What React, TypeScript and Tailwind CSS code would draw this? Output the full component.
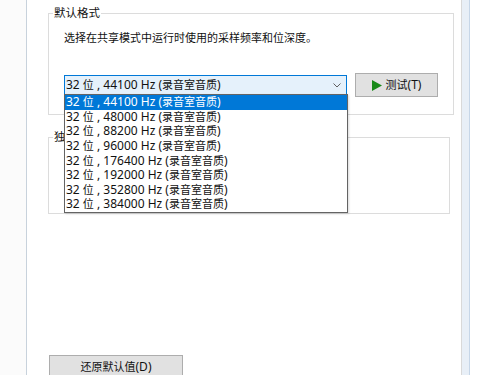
import React from 'react';

const rates = ['44100', '48000', '88200', '96000', '176400', '192000', '352800', '384000'];

const font = { fontFamily: '"Noto Sans", "Noto Sans CJK SC", sans-serif' };

// CJK glyphs in the original are a touch narrower than the latin run
const Cjk: React.FC<{ children: React.ReactNode }> = ({ children }) => (
    <span className="text-[11px]">{children}</span>
);

const Chevron: React.FC = () => (
    <svg width="8" height="5" viewBox="0 0 8 5" className="text-[#606060]">
        <path d="M0.5 0.5 L4 4 L7.5 0.5" fill="none" stroke="currentColor" strokeWidth="1" />
    </svg>
);

const RateText: React.FC<{ rate: string }> = ({ rate }) => (
    <span className="whitespace-nowrap">
        32 <Cjk>位</Cjk> , {rate} Hz (<Cjk>录音室音质</Cjk>)
    </span>
);

const App: React.FC = () => {
    return (
        <div
            className="w-[500px] h-[375px] flex overflow-hidden bg-white text-[12px] leading-[16px] text-[#111]"
            style={font}
        >
            {/* left edge */}
            <div className="w-[27px] h-full bg-[#fbfbfb] border-r border-[#c8d2dc]" />

            {/* tab page */}
            <div className="relative w-[435px] h-full bg-white pl-[21px] pt-[5px] border-r border-[#d9d9d9]">
                {/* default format group */}
                <fieldset className="w-[402px] border border-[#dcdcdc] px-[15px] pb-[17px]">
                    <legend className="-ml-[11px] px-[1px] text-[11.5px]">默认格式</legend>
                    <div className="mt-[9px] text-[11px]">选择在共享模式中运行时使用的采样频率和位深度。</div>
                    <div className="mt-[27px] flex items-center h-[24px]">
                        <div className="w-[283px] h-[21px] flex items-center justify-between bg-[#e5f1fb] border border-[#0078d7] pl-[1px] pr-[5px]">
                            <RateText rate="44100" />
                            <Chevron />
                        </div>
                        <button className="ml-[8px] w-[83px] h-[24px] flex items-center justify-center gap-[4px] bg-[#e1e1e1] border border-[#adadad]">
                            <svg width="10" height="11" viewBox="0 0 10 11">
                                <path d="M0 0 L10 5.5 L0 11 Z" fill="#188a18" />
                            </svg>
                            <span>
                                <Cjk>测试</Cjk>(T)
                            </span>
                        </button>
                    </div>
                </fieldset>

                {/* exclusive mode group */}
                <fieldset className="mt-[14px] w-[402px] h-[85px] border border-[#dcdcdc] px-[15px]">
                    <legend className="-ml-[11px] px-[1px] text-[11.5px]">独占模式</legend>
                </fieldset>

                <button className="mt-[141px] ml-[1px] w-[134px] h-[23px] bg-[#e1e1e1] border border-[#adadad] flex items-center justify-center">
                    <span>
                        <Cjk>还原默认值</Cjk>(D)
                    </span>
                </button>

                {/* open dropdown list */}
                <div className="absolute left-[37px] top-[94px] w-[284px] bg-white border border-[#646464] shadow-[1px_1px_2px_rgba(0,0,0,0.15)]">
                    {rates.map((r, i) => (
                        <div
                            key={r}
                            className={
                                i === 0
                                    ? 'h-[14.6px] leading-[14px] flex items-center pl-[1px] bg-[#0078d7] text-white'
                                    : 'h-[14.6px] leading-[14px] flex items-center pl-[1px]'
                            }
                        >
                            <RateText rate={r} />
                        </div>
                    ))}
                </div>
            </div>

            {/* window frame */}
            <div className="w-[8px] h-full bg-[#e8eff7] border-r border-[#c6d6e8]" />
            <div className="flex-1 h-full bg-white" />
        </div>
    );
};

export default App;
